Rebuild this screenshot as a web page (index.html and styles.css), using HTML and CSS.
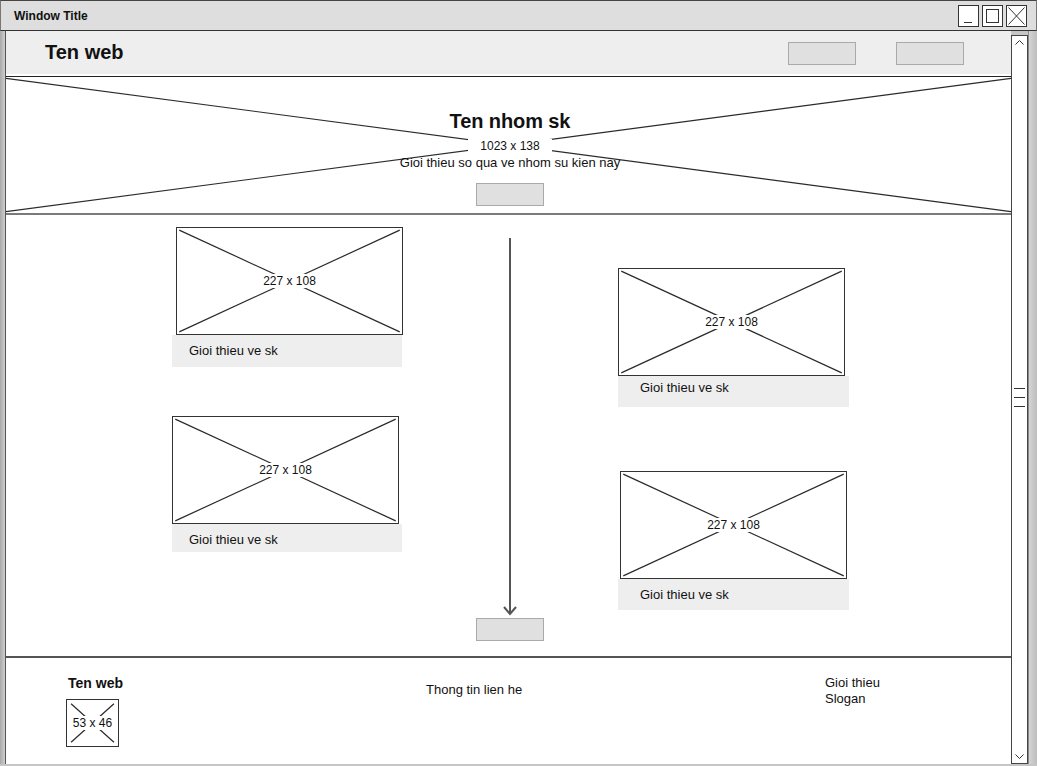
FILE: index.html
```html
<!DOCTYPE html>
<html>
<head>
<meta charset="utf-8">
<title>Wireframe</title>
<link rel="stylesheet" href="styles.css">
</head>
<body>
<div class="window">
  <div class="titlebar">
    <span class="title">Window Title</span>
    <div class="win-btns">
      <div class="win-btn"><svg width="19" height="20" viewBox="0 0 19 20"><line x1="5" y1="16.5" x2="13" y2="16.5" stroke="#333" stroke-width="1"/></svg></div>
      <div class="win-btn"><svg width="19" height="20" viewBox="0 0 19 20"><rect x="3.5" y="3.5" width="12" height="13" fill="none" stroke="#333" stroke-width="1"/></svg></div>
      <div class="win-btn"><svg width="19" height="20" viewBox="0 0 19 20"><path d="M1.5 1.5 L17.5 18.5 M17.5 1.5 L1.5 18.5" fill="none" stroke="#333" stroke-width="1"/></svg></div>
    </div>
  </div>
  <div class="win-body">
    <div class="frame-left"></div>
    <div class="page">
      <header class="site-header">
        <div class="logo">Ten web</div>
        <div class="nav">
          <div class="btn"></div>
          <div class="btn"></div>
        </div>
      </header>

      <section class="hero">
        <svg class="xlines" viewBox="0 0 100 100" preserveAspectRatio="none"><line x1="0" y1="1" x2="100" y2="99" vector-effect="non-scaling-stroke"/><line x1="0" y1="99" x2="100" y2="1" vector-effect="non-scaling-stroke"/></svg>
        <div class="hero-inner">
          <h1 class="hero-title">Ten nhom sk</h1>
          <span class="ph-label">1023 x 138</span>
          <p class="hero-desc">Gioi thieu so qua ve nhom su kien nay</p>
          <div class="btn hero-btn"></div>
        </div>
      </section>

      <section class="content">
        <div class="col col-left">
          <div class="card">
            <div class="ph ph-card shift-4">
              <svg class="xlines" viewBox="0 0 100 100" preserveAspectRatio="none"><line x1="1" y1="2" x2="99" y2="98" vector-effect="non-scaling-stroke"/><line x1="1" y1="98" x2="99" y2="2" vector-effect="non-scaling-stroke"/></svg>
              <span class="ph-label">227 x 108</span>
            </div>
            <div class="caption cap-l1">Gioi thieu ve sk</div>
          </div>
          <div class="card card-second-left">
            <div class="ph ph-card">
              <svg class="xlines" viewBox="0 0 100 100" preserveAspectRatio="none"><line x1="1" y1="2" x2="99" y2="98" vector-effect="non-scaling-stroke"/><line x1="1" y1="98" x2="99" y2="2" vector-effect="non-scaling-stroke"/></svg>
              <span class="ph-label">227 x 108</span>
            </div>
            <div class="caption cap-l2">Gioi thieu ve sk</div>
          </div>
        </div>

        <div class="col col-mid">
          <svg class="arrow" width="16" height="378" viewBox="0 0 16 378"><line x1="8" y1="0" x2="8" y2="376" stroke="#555" stroke-width="2"/><path d="M2 369 L8 376 L14 369" fill="none" stroke="#555" stroke-width="2"/></svg>
          <div class="btn"></div>
        </div>

        <div class="col col-right">
          <div class="card">
            <div class="ph ph-card">
              <svg class="xlines" viewBox="0 0 100 100" preserveAspectRatio="none"><line x1="1" y1="2" x2="99" y2="98" vector-effect="non-scaling-stroke"/><line x1="1" y1="98" x2="99" y2="2" vector-effect="non-scaling-stroke"/></svg>
              <span class="ph-label">227 x 108</span>
            </div>
            <div class="caption cap-r1">Gioi thieu ve sk</div>
          </div>
          <div class="card card-second-right">
            <div class="ph ph-card shift-2">
              <svg class="xlines" viewBox="0 0 100 100" preserveAspectRatio="none"><line x1="1" y1="2" x2="99" y2="98" vector-effect="non-scaling-stroke"/><line x1="1" y1="98" x2="99" y2="2" vector-effect="non-scaling-stroke"/></svg>
              <span class="ph-label">227 x 108</span>
            </div>
            <div class="caption cap-r2">Gioi thieu ve sk</div>
          </div>
        </div>
      </section>

      <footer class="site-footer">
        <div class="f-col f-brand">
          <div class="f-title">Ten web</div>
          <div class="ph ph-logo">
            <svg class="xlines" viewBox="0 0 100 100" preserveAspectRatio="none"><line x1="8" y1="8" x2="92" y2="92" vector-effect="non-scaling-stroke"/><line x1="8" y1="92" x2="92" y2="8" vector-effect="non-scaling-stroke"/></svg>
            <span class="ph-label ph-label-tight">53 x 46</span>
          </div>
        </div>
        <div class="f-col f-contact">Thong tin lien he</div>
        <div class="f-col f-about">
          <div>Gioi thieu</div>
          <div>Slogan</div>
        </div>
      </footer>
    </div>
    <div class="scrollbar">
      <svg class="chev" width="15" height="12" viewBox="0 0 15 12"><path d="M3.5 8.5 L7.5 4.5 L11.5 8.5" fill="none" stroke="#333" stroke-width="1"/></svg>
      <div class="grip"><span></span><span></span><span></span></div>
      <svg class="chev" width="15" height="12" viewBox="0 0 15 12"><path d="M3.5 3.5 L7.5 7.5 L11.5 3.5" fill="none" stroke="#333" stroke-width="1"/></svg>
    </div>
    <div class="frame-right"></div>
  </div>
</div>
</body>
</html>
```

FILE: styles.css
```css
* { box-sizing: border-box; }

body {
  margin: 0;
  font-family: "Liberation Sans", Arial, sans-serif;
  color: #111;
  background: #fff;
}

.window {
  width: 1037px;
  height: 766px;
  display: flex;
  flex-direction: column;
  background: #c6c6c6;
  overflow: hidden;
}

/* ---------- title bar ---------- */
.titlebar {
  height: 31px;
  flex: none;
  display: flex;
  align-items: center;
  background: #dedede;
  border-top: 1px solid #444;
  border-bottom: 1px solid #333;
  border-left: 1px solid #777;
  border-right: 1px solid #777;
  padding-left: 13px;
}

.title {
  font-weight: bold;
  font-size: 12px;
  color: #111;
}

.win-btns {
  margin-left: auto;
  display: flex;
  gap: 3px;
  padding-right: 9px;
}

.win-btn {
  width: 21px;
  height: 22px;
  border: 1px solid #333;
  background: #fff;
  display: flex;
}

/* ---------- body ---------- */
.win-body {
  flex: 1;
  min-height: 0;
  display: flex;
  padding-bottom: 2px;
}

.frame-left {
  width: 6px;
  flex: none;
  background: linear-gradient(to right, #a9a9a9, #cfcfcf);
  border-right: 1px solid #555;
}

.page {
  width: 1005px;
  flex: none;
  background: #fff;
  display: flex;
  flex-direction: column;
}

.scrollbar {
  width: 17px;
  flex: none;
  margin-top: 4px;
  border: 1px solid #444;
  background: #fff;
  display: flex;
  flex-direction: column;
  justify-content: space-between;
  align-items: center;
}

.chev { display: block; }

.grip {
  width: 11px;
  display: flex;
  flex-direction: column;
  gap: 8px;
  margin-top: -4px;
}

.grip span {
  display: block;
  height: 1px;
  background: #333;
}

.frame-right {
  flex: 1;
  background: linear-gradient(to right, #8a8a8a 0, #8a8a8a 1px, #d4d4d4 1px, #bdbdbd 100%);
}

/* ---------- shared ---------- */
.btn {
  width: 68px;
  height: 23px;
  background: #e0e0e0;
  border: 1px solid #aaa;
}

.ph {
  position: relative;
  background: #fff;
  border: 1px solid #333;
  display: flex;
  align-items: center;
  justify-content: center;
}

.xlines {
  position: absolute;
  inset: 0;
  width: 100%;
  height: 100%;
}

.xlines line {
  stroke: #2a2a2a;
  stroke-width: 1.2;
}

.ph-label {
  position: relative;
  font-size: 12px;
  line-height: 14px;
  background: #fff;
  padding: 0 6px;
  color: #111;
}

.ph-label-tight { padding: 0 2px; }

/* ---------- header ---------- */
.site-header {
  height: 43px;
  flex: none;
  background: #eeeeee;
  display: flex;
  align-items: center;
  padding-left: 39px;
  padding-right: 47px;
}

.logo {
  font-size: 20px;
  font-weight: bold;
  line-height: 24px;
  margin-top: -1px;
}

.nav {
  margin-left: auto;
  display: flex;
  gap: 40px;
  margin-top: 2px;
}

/* ---------- hero ---------- */
.hero {
  position: relative;
  flex: none;
  height: 139px;
  margin-top: 2px;
  border-top: 1px solid #222;
  border-bottom: 2px solid #7a7a7a;
}

.hero-inner {
  position: relative;
  display: flex;
  flex-direction: column;
  align-items: center;
  padding-top: 32px;
  padding-left: 3px;
}

.hero-title {
  margin: 0;
  font-size: 20px;
  line-height: 24px;
  font-weight: bold;
  letter-spacing: -0.1px;
}

.hero-inner .ph-label {
  margin-top: 6px;
  padding: 0 12px;
}

.hero-desc {
  margin: 2px 0 0;
  font-size: 13px;
  line-height: 15px;
}

.hero-btn { margin-top: 13px; }

/* ---------- content ---------- */
.content {
  flex: none;
  height: 443px;
  border-bottom: 2px solid #555;
  display: flex;
  padding-left: 166px;
}

.col-left {
  width: 230px;
  padding-top: 12px;
}

.col-mid {
  width: 216px;
  padding-top: 23px;
  display: flex;
  flex-direction: column;
  align-items: center;
}

.arrow { display: block; margin-bottom: 2px; }

.col-right {
  width: 231px;
  padding-top: 53px;
}

.card { width: 100%; }

.card-second-left { margin-top: 49px; }
.card-second-right { margin-top: 64px; }

.ph-card {
  width: 227px;
  height: 108px;
}

.shift-4 { margin-left: 4px; }
.shift-2 { margin-left: 2px; }

.caption {
  background: #eeeeee;
  font-size: 13px;
  line-height: 15px;
  padding-left: 17px;
}

.cap-l1 { height: 32px; padding-top: 8px; }
.cap-l2 { height: 28px; padding-top: 8px; }
.cap-r1 { height: 31px; padding-top: 4px; padding-left: 22px; }
.cap-r2 { height: 31px; padding-top: 8px; padding-left: 22px; }

/* ---------- footer ---------- */
.site-footer {
  flex: 1;
  display: grid;
  grid-template-columns: 360px 399px 1fr;
  padding-left: 60px;
  font-size: 13px;
  line-height: 16px;
}

.f-brand { padding-top: 17px; }

.f-title {
  font-size: 14px;
  font-weight: bold;
  line-height: 16px;
  margin-left: 2px;
}

.ph-logo {
  width: 53px;
  height: 48px;
  margin-top: 8px;
}

.f-contact { padding-top: 24px; }

.f-about { padding-top: 17px; }
```
